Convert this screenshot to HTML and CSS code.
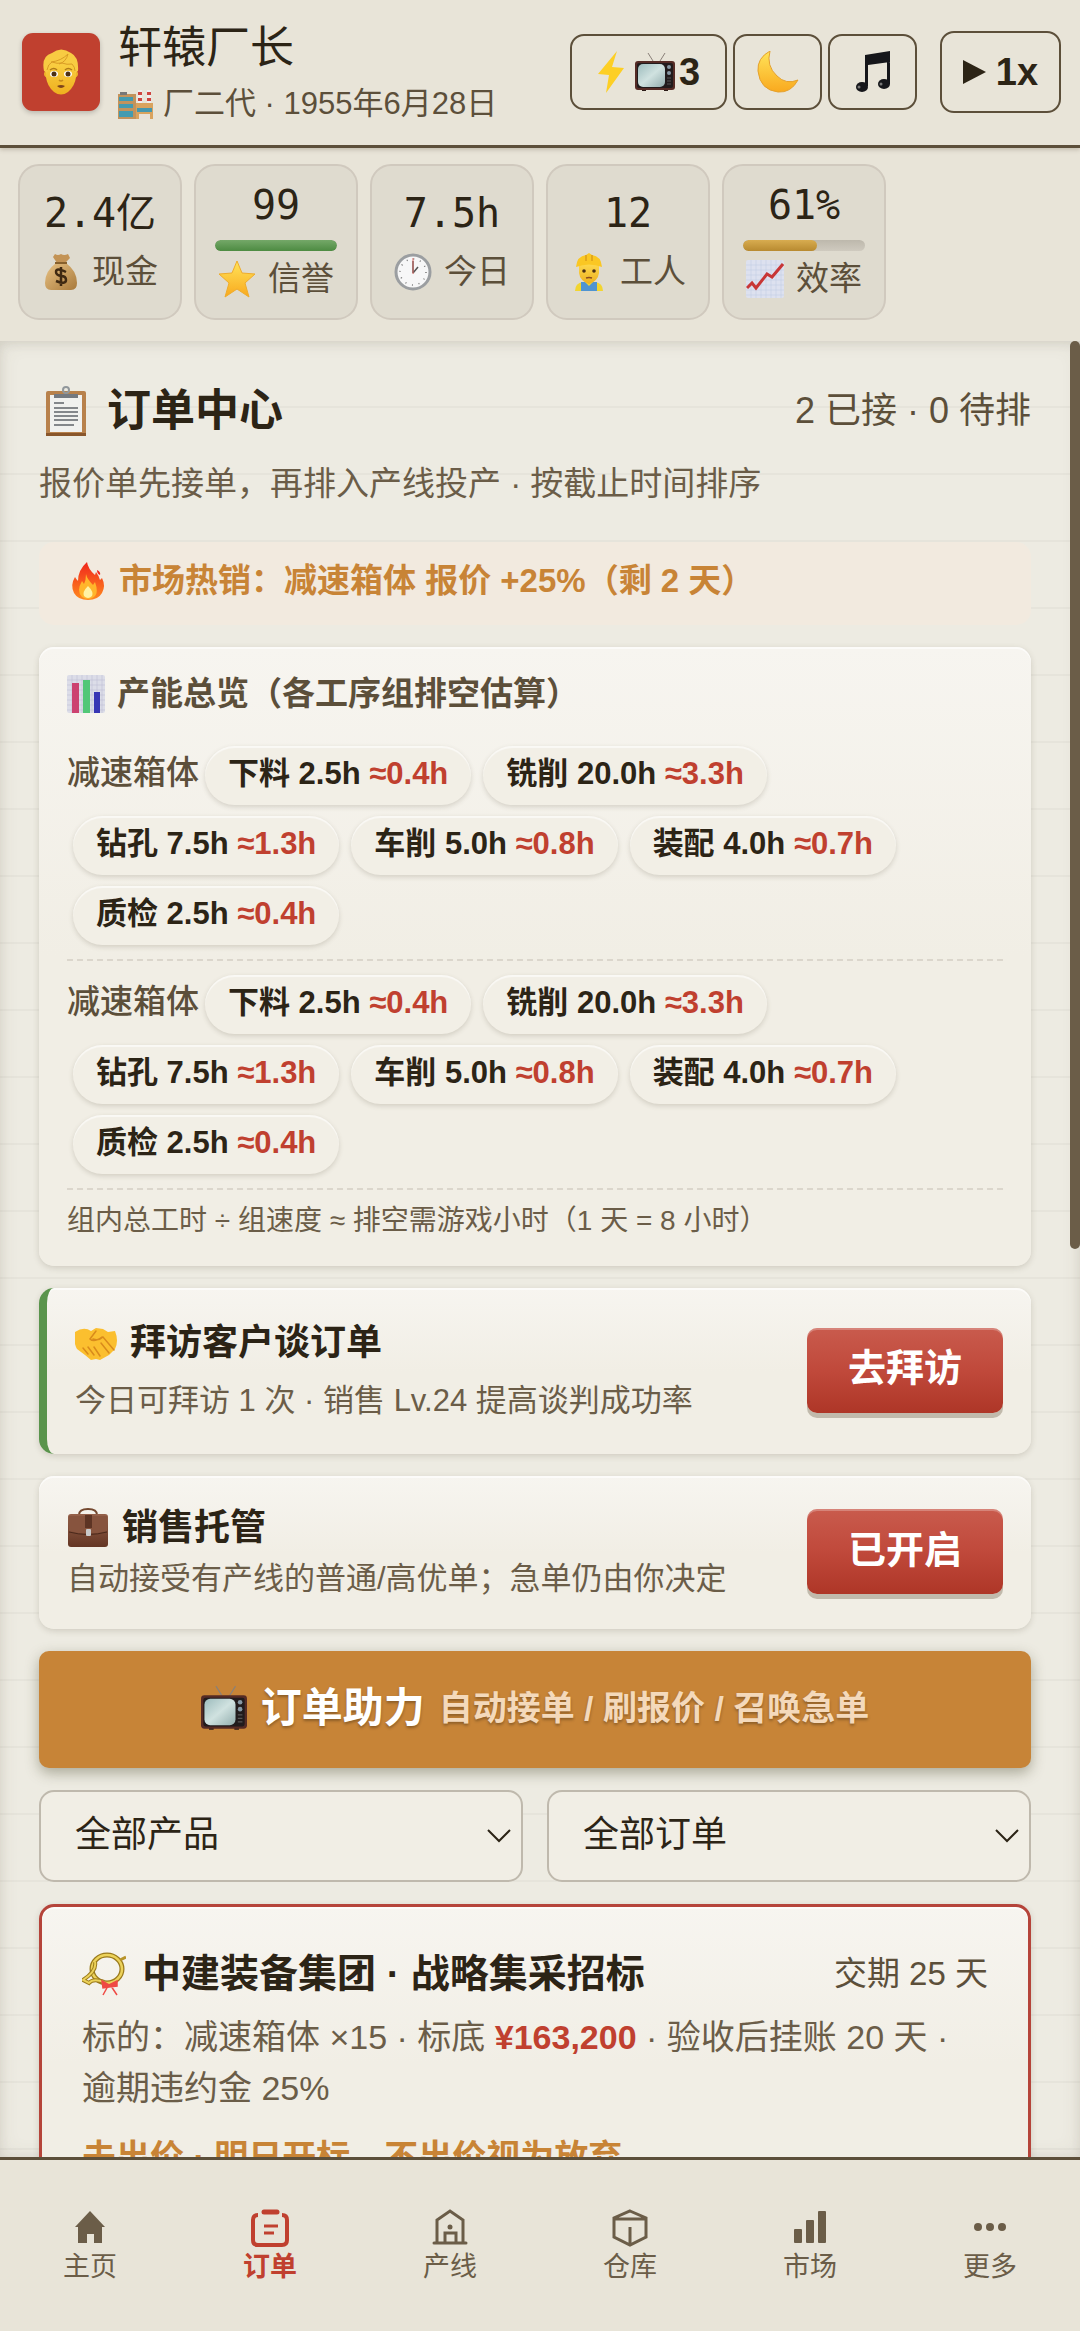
FILE: index.html
```html
<!DOCTYPE html>
<html lang="zh-CN">
<head>
<meta charset="UTF-8">
<meta name="viewport" content="width=device-width, initial-scale=1.0">
<title>订单中心</title>
<link rel="stylesheet" href="styles.css">
</head>
<body>

<!-- 共用图标 -->
<svg class="defs" width="0" height="0" aria-hidden="true">
    <defs>
        <linearGradient id="gold" x1="0" y1="0" x2="0" y2="1">
            <stop offset="0" stop-color="#ffe45a"/>
            <stop offset="1" stop-color="#f9a91e"/>
        </linearGradient>
        <linearGradient id="skin" x1="0" y1="0" x2="0" y2="1">
            <stop offset="0" stop-color="#fdd84c"/>
            <stop offset="1" stop-color="#eeb01f"/>
        </linearGradient>
        <linearGradient id="bag" x1="0" y1="0" x2="1" y2="1">
            <stop offset="0" stop-color="#e9c385"/>
            <stop offset="1" stop-color="#a8793b"/>
        </linearGradient>
        <linearGradient id="leather" x1="0" y1="0" x2="0" y2="1">
            <stop offset="0" stop-color="#946049"/>
            <stop offset="1" stop-color="#643624"/>
        </linearGradient>
        <linearGradient id="screen" x1="0" y1="0" x2="1" y2="1">
            <stop offset="0" stop-color="#9dbcbd"/>
            <stop offset=".5" stop-color="#d0e2e0"/>
            <stop offset="1" stop-color="#93aeae"/>
        </linearGradient>
        <linearGradient id="flame" x1="0" y1="0" x2="0" y2="1">
            <stop offset="0" stop-color="#f0261c"/>
            <stop offset="1" stop-color="#ff8a1f"/>
        </linearGradient>
        <symbol id="tv" viewBox="0 0 40 40">
            <path d="M18 9 13 1M25 9l5-8" stroke="#8a8078" stroke-width="1" fill="none"/>
            <path d="M7 37h4v2H7zM29 37h4v2h-4z" fill="#2c1c18"/>
            <rect x="0" y="9" width="40" height="29" rx="3" fill="#552b25"/>
            <rect x="2" y="11" width="36" height="25" rx="2" fill="#211b1c"/>
            <rect x="3" y="12" width="27" height="23" rx="5" fill="url(#screen)"/>
            <circle cx="34" cy="15" r="2" fill="#8798a4"/>
            <circle cx="34" cy="21" r="2" fill="#8798a4"/>
            <path d="M32 26h4M32 29h4M32 32h4" stroke="#555" stroke-width="1"/>
        </symbol>
    </defs>
</svg>

<!-- 顶部 -->
<header class="header">
    <div class="avatar">
        <svg viewBox="0 0 36 46" width="36" height="46" aria-hidden="true">
            <ellipse cx="18" cy="25" rx="17" ry="7" fill="#efb62b"/>
            <path d="M3 17Q3 5 18 5t15 12v11q-1 9-8 15-7 5-14 0-7-6-8-15z" fill="url(#skin)"/>
            <path d="M1 22Q-2 7 9 4q9-7 19 0 8 4 7 18l-3 2q0-6-3-9-10 2-16-1-7 2-9 10z" fill="#f8cb42"/>
            <path d="M4 21q1-6 5-8 5 2 10 1 5 2 10 1 3 3 3 7" fill="none" stroke="#d99b24" stroke-width="1"/>
            <path d="M8 13Q18 12 25 5q-2 8-9 10" fill="none" stroke="#d99b24" stroke-width="1"/>
            <path d="M7 21q4-3 7 0M22 21q3-3 7 0" stroke="#b07a1a" stroke-width="1.5" fill="none"/>
            <ellipse cx="11" cy="25" rx="4" ry="3" fill="#fff"/>
            <ellipse cx="25" cy="25" rx="4" ry="3" fill="#fff"/>
            <circle cx="11" cy="25" r="2.5" fill="#4c3014"/>
            <circle cx="25" cy="25" r="2.5" fill="#4c3014"/>
            <path d="M16 31q2 2 4 0" stroke="#c58a1b" stroke-width="1.5" fill="none"/>
            <path d="M14 37q4-2 8 0-4 4-8 0z" fill="#7d451c"/>
        </svg>
    </div>
    <div class="player">
        <div class="player-name">轩辕厂长</div>
        <div class="player-sub">
            <svg viewBox="0 0 36 32" width="36" height="32" aria-hidden="true">
                <path d="M20 2h4v16h-4zM29 2h4v16h-4z" fill="#eee"/>
                <path d="M20 4h4v3h-4zM29 4h4v3h-4zM20 10h4v3h-4zM29 10h4v3h-4z" fill="#d0453f"/>
                <path d="M0 6h18v25H0z" fill="#c2935c"/>
                <path d="M2 4h7v3H2z" fill="#777"/>
                <path d="M1 9h14v4H1zM1 16h14v4H1zM1 23h14v6H1z" fill="#439bb0"/>
                <path d="M18 15h17v16H18z" fill="#d9a35e"/>
                <path d="M19 20h15v4H19z" fill="#4597ae"/>
                <path d="M21 26h11v5H21z" fill="#e8e2d8"/>
            </svg>
            <span>厂二代 · 1955年6月28日</span>
        </div>
    </div>
    <div class="tools">
        <button class="tool tool-boost" type="button">
            <svg viewBox="0 0 28 42" width="28" height="42" aria-hidden="true">
                <path d="M20 0 1 23l11 1-3 18 18-25-12-1z" fill="#fdcf25"/>
            </svg>
            <span class="boost-count"><svg width="40" height="40" aria-hidden="true"><use href="#tv"/></svg>3</span>
        </button>
        <button class="tool" type="button" aria-label="夜间模式">
            <svg viewBox="0 0 42 42" width="42" height="42" aria-hidden="true">
                <path d="M13 0Q0 7 1 20q2 19 20 21 13 1 20-12-12 5-21-4Q9 15 13 0z" fill="url(#gold)" stroke="#e5a02b" stroke-width="1"/>
            </svg>
        </button>
        <button class="tool" type="button" aria-label="音乐">
            <svg viewBox="0 0 36 42" width="36" height="42" aria-hidden="true">
                <path d="M10 4 35 0v11L13 14v21h-3zM32 8h3v25h-3z" fill="#15161a"/>
                <ellipse cx="7" cy="36" rx="6" ry="5" fill="#15161a"/>
                <ellipse cx="29" cy="33" rx="6" ry="5" fill="#15161a"/>
                <circle cx="4" cy="36" r="1.5" fill="#777"/>
                <circle cx="26" cy="33" r="1.5" fill="#777"/>
            </svg>
        </button>
        <button class="tool tool-speed" type="button">
            <svg viewBox="0 0 23 24" width="23" height="24" aria-hidden="true"><path d="M0 0 23 12 0 24z" fill="#2c2416"/></svg>
            <span>1x</span>
        </button>
    </div>
</header>

<!-- 资源栏 -->
<section class="stats">
    <div class="stat">
        <div class="stat-value">2.4亿</div>
        <div class="stat-label">
            <svg viewBox="0 0 38 38" width="38" height="38" aria-hidden="true">
                <path d="M13 1q3 2 6 0 3 2 7 0l2 4-5 5H15l-4-6z" fill="#c39355"/>
                <path d="M14 10h10q11 8 11 20 0 7-6 7H9q-6 0-6-7 0-12 11-20z" fill="url(#bag)"/>
                <path d="M13 10h12" stroke="#87602c" stroke-width="2"/>
                <path d="M24 19q-10-5-10 0 0 3 5 4 5 0 5 4 0 5-10 1M19 14v19" stroke="#3f2912" stroke-width="2.5" fill="none"/>
            </svg>
            <span>现金</span>
        </div>
    </div>
    <div class="stat">
        <div class="stat-value">99</div>
        <div class="bar"><div class="bar-fill bar-green" style="width: 100%"></div></div>
        <div class="stat-label">
            <svg viewBox="0 0 38 38" width="38" height="38" aria-hidden="true">
                <path d="m19 1 5 12 13 1-10 9 4 14-12-8-12 8 4-14L1 14l13-1z" fill="url(#gold)" stroke="#efac2b" stroke-width="1" stroke-linejoin="round"/>
            </svg>
            <span>信誉</span>
        </div>
    </div>
    <div class="stat">
        <div class="stat-value">7.5h</div>
        <div class="stat-label">
            <svg viewBox="0 0 38 38" width="38" height="38" aria-hidden="true">
                <circle cx="19" cy="19" r="17" fill="#f7f7f8" stroke="#9b9ea1" stroke-width="3"/>
                <circle cx="19" cy="19" r="13" fill="none" stroke="#777" stroke-width="1.5" stroke-dasharray="1 5.8"/>
                <path d="M19 20V8M19 20l5-6" stroke="#555" stroke-width="1.5"/>
                <path d="M19 21V5" stroke="#d96a65" stroke-width="1"/>
            </svg>
            <span>今日</span>
        </div>
    </div>
    <div class="stat">
        <div class="stat-value">12</div>
        <div class="stat-label">
            <svg viewBox="0 0 38 38" width="38" height="38" aria-hidden="true">
                <path d="M5 38q0-8 8-9h12q8 1 8 9z" fill="#f2d530"/>
                <path d="M11 29h4l4 4 4-4h4v9H11z" fill="#4f94d2"/>
                <path d="M9 11h20v9q-1 8-10 11-9-3-10-11z" fill="url(#skin)"/>
                <path d="M6 14Q7 3 16 2l3-2 3 2q9 1 10 12-13-5-26 0z" fill="#fac723"/>
                <path d="M16 2v6M22 2v6" stroke="#dc9e18" stroke-width="1.5"/>
                <circle cx="14" cy="18" r="1.8" fill="#4c3014"/>
                <circle cx="24" cy="18" r="1.8" fill="#4c3014"/>
                <path d="M16 25q3-1 6 0" stroke="#8b4c1d" stroke-width="1.5" fill="none"/>
            </svg>
            <span>工人</span>
        </div>
    </div>
    <div class="stat">
        <div class="stat-value">61%</div>
        <div class="bar"><div class="bar-fill bar-gold" style="width: 61%"></div></div>
        <div class="stat-label">
            <svg viewBox="0 0 38 38" width="38" height="38" aria-hidden="true">
                <rect width="38" height="38" rx="2" fill="#dde1ef"/>
                <path d="M5 0v38M10 0v38M15 0v38M20 0v38M25 0v38M30 0v38M35 0v38M0 5h38M0 10h38M0 15h38M0 20h38M0 25h38M0 30h38M0 35h38" stroke="#bcc8e2" stroke-width=".5"/>
                <path d="m1 28 5-5 4 5L21 14l5 3L37 4" stroke="#c83636" stroke-width="3" fill="none"/>
            </svg>
            <span>效率</span>
        </div>
    </div>
</section>

<!-- 订单中心 -->
<main class="main">
    <div class="scroll-thumb"></div>

    <div class="page-head">
        <h1 class="page-title">
            <svg viewBox="0 0 42 52" width="42" height="52" aria-hidden="true">
                <rect x="1" y="6" width="40" height="45" rx="2" fill="#b8814b"/>
                <path d="M1 48h40v3H1z" fill="#89562b"/>
                <rect x="5" y="10" width="32" height="37" fill="#f1f1ef"/>
                <path d="M9 9h24v4H9z" fill="#747980"/>
                <circle cx="21" cy="5" r="3" fill="none" stroke="#91979b" stroke-width="2"/>
                <path d="M9 18h10M9 23h24M9 27h24M9 31h24M9 35h24M9 40h20" stroke="#84878b" stroke-width="2"/>
            </svg>
            <span>订单中心</span>
        </h1>
        <div class="page-count">2 已接 · 0 待排</div>
    </div>
    <p class="page-desc">报价单先接单，再排入产线投产 · 按截止时间排序</p>

    <div class="hot">
        <svg viewBox="0 0 38 38" width="38" height="38" aria-hidden="true">
            <path d="M18 0q1 7 8 13l1-3q3 4 4 8l2-2q4 8 0 15-4 7-14 7T5 31q-4-8 1-16 1 2 3 4Q9 8 18 0z" fill="url(#flame)"/>
            <path d="M17 12q1 5 7 11l2-3q4 11-1 15-6 4-12 0-6-6 0-16l2 3q2-4 2-10z" fill="#ffb52b"/>
            <path d="M19 24q6 6 4 10-4 4-8 0-2-4 4-10z" fill="#fff2a5"/>
            <path d="M28 8q4 2 3 5-3-1-3-5z" fill="#f0261c"/>
        </svg>
        <span>市场热销：减速箱体 报价 +25%（剩 2 天）</span>
    </div>

    <section class="card capacity">
        <h2 class="capacity-title">
            <svg viewBox="0 0 38 38" width="38" height="38" aria-hidden="true">
                <rect width="38" height="38" rx="2" fill="#dcdde8"/>
                <path d="M5 0v38M10 0v38M15 0v38M20 0v38M25 0v38M30 0v38M35 0v38M0 5h38M0 10h38M0 15h38M0 20h38M0 25h38M0 30h38M0 35h38" stroke="#bbbbd0" stroke-width=".5"/>
                <path d="M5 8h7v30H5z" fill="#cc4270"/>
                <path d="M16 5h7v33h-7z" fill="#51c777"/>
                <path d="M27 17h6v21h-6z" fill="#3736b4"/>
            </svg>
            <span>产能总览（各工序组排空估算）</span>
        </h2>
        <div class="group">
            <span class="group-name">减速箱体</span>
            <span class="chip">下料 2.5h <em>≈0.4h</em></span>
            <span class="chip">铣削 20.0h <em>≈3.3h</em></span>
            <span class="chip">钻孔 7.5h <em>≈1.3h</em></span>
            <span class="chip">车削 5.0h <em>≈0.8h</em></span>
            <span class="chip">装配 4.0h <em>≈0.7h</em></span>
            <span class="chip">质检 2.5h <em>≈0.4h</em></span>
        </div>
        <div class="group">
            <span class="group-name">减速箱体</span>
            <span class="chip">下料 2.5h <em>≈0.4h</em></span>
            <span class="chip">铣削 20.0h <em>≈3.3h</em></span>
            <span class="chip">钻孔 7.5h <em>≈1.3h</em></span>
            <span class="chip">车削 5.0h <em>≈0.8h</em></span>
            <span class="chip">装配 4.0h <em>≈0.7h</em></span>
            <span class="chip">质检 2.5h <em>≈0.4h</em></span>
        </div>
        <p class="capacity-note">组内总工时 ÷ 组速度 ≈ 排空需游戏小时（1 天 = 8 小时）</p>
    </section>

    <section class="card action visit">
        <div>
            <h2 class="action-title">
                <svg viewBox="0 0 42 42" width="42" height="42" aria-hidden="true">
                    <path d="M0 10q9-6 16-1l5-3 7 1 5 3 7-1q4 10 0 18l-6 6-9 5-4-1-5 1-6-5-8-6q-4-7-2-17z" fill="#fbbf2f"/>
                    <path d="M18 17q6 2 10-2l11 13M21 9l-6 8q4 4 12-2M8 26l5 6M13 25l6 8M19 25l6 9M26 21l8 10" stroke="#d98a1b" stroke-width="1.5" fill="none" stroke-linecap="round"/>
                </svg>
                <span>拜访客户谈订单</span>
            </h2>
            <p class="action-desc">今日可拜访 1 次 · 销售 Lv.24 提高谈判成功率</p>
        </div>
        <button class="btn-red" type="button">去拜访</button>
    </section>

    <section class="card action trust">
        <div>
            <h2 class="action-title">
                <svg viewBox="0 0 42 42" width="42" height="42" aria-hidden="true">
                    <path d="M12 8q0-6 9-6t9 6" stroke="#74482f" stroke-width="2" fill="none"/>
                    <rect x="1" y="7" width="40" height="33" rx="3" fill="url(#leather)"/>
                    <path d="M2 9h38v15q-19 5-38 0z" fill="#87543e"/>
                    <path d="M2 25q19 5 38 0" stroke="#4b291b" stroke-width="1" fill="none"/>
                    <path d="M18 8h7v13h-7z" fill="#5d3424"/>
                    <rect x="19" y="22" width="5" height="7" rx="1" fill="#c9c9c9"/>
                </svg>
                <span>销售托管</span>
            </h2>
            <p class="action-desc">自动接受有产线的普通/高优单；急单仍由你决定</p>
        </div>
        <button class="btn-red" type="button">已开启</button>
    </section>

    <button class="boost" type="button">
        <svg width="46" height="46" aria-hidden="true"><use href="#tv"/></svg>
        <span class="boost-title">订单助力</span>
        <span class="boost-sub">自动接单 / 刷报价 / 召唤急单</span>
    </button>

    <div class="filters">
        <select class="filter" aria-label="产品筛选"><option>全部产品</option></select>
        <select class="filter" aria-label="订单筛选"><option>全部订单</option></select>
    </div>

    <article class="card bid">
        <div class="bid-head">
            <h2 class="bid-title">
                <svg viewBox="0 0 44 44" width="44" height="44" aria-hidden="true">
                    <ellipse cx="25" cy="17" rx="15" ry="14" fill="none" stroke="#9a7a1c" stroke-width="5"/>
                    <ellipse cx="25" cy="17" rx="15" ry="14" fill="none" stroke="#ecd25a" stroke-width="2.5"/>
                    <path d="M13 10q2 9-12 18l6 3q4-5 15-1" fill="none" stroke="#9a7a1c" stroke-width="4"/>
                    <path d="M13 10q2 9-12 18l6 3q4-5 15-1" fill="none" stroke="#ecd25a" stroke-width="2"/>
                    <path d="m38 8 6-3" stroke="#b8942a" stroke-width="3"/>
                    <path d="m20 29 7 4 8-4v5l-8 1-6 1zM26 34l-5 9M29 34l6 9" fill="#ef4a44" stroke="#ef4a44" stroke-width="1.5"/>
                </svg>
                <span>中建装备集团 · 战略集采招标</span>
            </h2>
            <span class="bid-due">交期 25 天</span>
        </div>
        <p class="bid-desc">标的：减速箱体 ×15 · 标底 <strong>¥163,200</strong> · 验收后挂账 20 天 · <span class="penalty">逾期违约金 25%</span></p>
        <p class="bid-warn">未出价 · 明日开标，不出价视为放弃</p>
    </article>
</main>

<!-- 底部导航 -->
<nav class="nav">
    <a href="#" class="nav-item">
        <svg viewBox="0 0 40 40" width="40" height="40" aria-hidden="true">
            <path d="M20 3 35 19h-3v16h-8v-9h-7v9H8V19H5z" fill="currentColor"/>
        </svg>
        <span>主页</span>
    </a>
    <a href="#" class="nav-item active" aria-current="page">
        <svg viewBox="0 0 40 40" width="40" height="40" fill="none" stroke="currentColor" stroke-width="4" aria-hidden="true">
            <path d="M8 7q-5 0-5 5v20q0 5 5 5h24q5 0 5-5V12q0-5-5-5"/>
            <path d="M14 4h13" stroke-width="5" stroke-linecap="round"/>
            <path d="M14 18h14M14 25h10" stroke-width="3"/>
        </svg>
        <span>订单</span>
    </a>
    <a href="#" class="nav-item">
        <svg viewBox="0 0 40 40" width="40" height="40" fill="none" stroke="currentColor" stroke-width="3" aria-hidden="true">
            <path d="M7 35V12l13-9 13 9v23M15 35V25h11v10"/>
            <path d="M4 35h32" stroke-linecap="round"/>
            <circle cx="20" cy="19" r="2.5" fill="currentColor" stroke="none"/>
        </svg>
        <span>产线</span>
    </a>
    <a href="#" class="nav-item">
        <svg viewBox="0 0 40 40" width="40" height="40" fill="none" stroke="currentColor" stroke-width="3" aria-hidden="true">
            <path d="m20 3 16 7v19l-16 8-16-8V10zM4 11h32M20 19v18"/>
        </svg>
        <span>仓库</span>
    </a>
    <a href="#" class="nav-item">
        <svg viewBox="0 0 40 40" width="40" height="40" fill="currentColor" aria-hidden="true">
            <rect x="4" y="21" width="8" height="14" rx="1"/>
            <rect x="16" y="12" width="8" height="23" rx="1"/>
            <rect x="28" y="3" width="8" height="32" rx="1"/>
        </svg>
        <span>市场</span>
    </a>
    <a href="#" class="nav-item">
        <svg viewBox="0 0 40 40" width="40" height="40" fill="currentColor" aria-hidden="true">
            <circle cx="8" cy="19" r="4"/>
            <circle cx="20" cy="19" r="4"/>
            <circle cx="32" cy="19" r="4"/>
        </svg>
        <span>更多</span>
    </a>
</nav>
</body>
</html>
```
FILE: styles.css
```css
* {
    box-sizing: border-box;
}
body {
    display: flex;
    flex-direction: column;
    height: 100vh;
    margin: 0;
    background: #e8e4d8;
    color: #2c2416;
    font-family: "Liberation Sans", "Noto Sans CJK SC", sans-serif;
}
h1, h2, p {
    margin: 0;
}
button, select {
    color: inherit;
    font-family: inherit;
    cursor: pointer;
}
svg {
    flex: none;
}
.defs {
    position: absolute;
}
/* 顶部 */
.header {
    display: flex;
    align-items: center;
    gap: 18px;
    padding: 17px 19px 19px 22px;
    border-bottom: 3px solid #5c4f3a;
    box-shadow: 0 2px 4px rgba(92, 79, 58, 0.25);
    z-index: 1;
}
.avatar {
    display: flex;
    flex: none;
    align-items: center;
    justify-content: center;
    width: 78px;
    height: 78px;
    border-radius: 11px;
    background: #c0402f;
    box-shadow: 0 2px 5px rgba(0, 0, 0, 0.2);
}
.player {
    flex: 1;
    white-space: nowrap;
}
.player-name {
    font-size: 44px;
    line-height: 62px;
}
.player-sub {
    display: flex;
    align-items: center;
    gap: 9px;
    margin-top: 3px;
    color: #5c4f3a;
    font-size: 31px;
    line-height: 44px;
}
.tools {
    display: flex;
    align-items: center;
    gap: 6px;
}
.tool {
    display: flex;
    align-items: center;
    justify-content: center;
    gap: 10px;
    width: 89px;
    height: 76px;
    padding: 0;
    border: 2px solid #5c4f3a;
    border-radius: 14px;
    background: none;
    font-size: 38px;
    font-weight: 700;
    line-height: 48px;
}
.tool-boost {
    width: 157px;
}
.boost-count {
    display: flex;
    align-items: center;
    gap: 4px;
}
.tool-speed {
    width: 121px;
    height: 82px;
    margin-left: 17px;
}
/* 资源栏 */
.stats {
    display: flex;
    gap: 12px;
    padding: 16px 18px 21px;
}
.stat {
    display: flex;
    flex-direction: column;
    justify-content: center;
    width: 164px;
    padding: 16px 19px;
    border: 2px solid #d0c9be;
    border-radius: 21px;
    background: #dfdbcf;
    text-align: center;
}
.stat-value {
    font-family: "DejaVu Sans Mono", "Noto Sans CJK SC", monospace;
    font-size: 40px;
    line-height: 46px;
    white-space: nowrap;
}
.stat-label {
    display: flex;
    align-items: center;
    justify-content: center;
    gap: 12px;
    margin-top: 13px;
    color: #5c4f3a;
    font-size: 33px;
    line-height: 46px;
    white-space: nowrap;
}
.bar {
    height: 11px;
    margin-top: 12px;
    border-radius: 6px;
    background: linear-gradient(#bdb8ac, #cfcabf);
    overflow: hidden;
}
.bar + .stat-label {
    margin-top: 5px;
}
.bar-fill {
    height: 100%;
    border-radius: 6px;
}
.bar-green {
    background: linear-gradient(#74a868, #4d8b42);
}
.bar-gold {
    background: linear-gradient(#d8ac50, #b88a30);
}
/* 主内容 */
.main {
    position: relative;
    flex: 1;
    min-height: 0;
    padding: 37px 49px 0 39px;
    overflow: hidden;
    background: repeating-linear-gradient(#edebe2 0 65px, #e6e4db 65px 67px);
    box-shadow: inset 0 0 20px rgba(92, 79, 58, 0.1), inset 0 3px 10px rgba(92, 79, 58, 0.1);
}
/* 滚动条浮在内容之上 */
.scroll-thumb {
    position: absolute;
    top: 0;
    right: 0;
    width: 10px;
    height: 50%;
    border-radius: 5px;
    background: #6b5d48;
}
.page-head {
    display: flex;
    align-items: center;
    justify-content: space-between;
}
.page-title {
    display: flex;
    align-items: center;
    gap: 20px;
    padding-left: 6px;
    font-size: 44px;
    line-height: 66px;
}
.page-count {
    color: #5c4f3a;
    font-size: 36px;
    line-height: 66px;
}
.page-desc {
    margin-top: 15px;
    color: #6b5d48;
    font-size: 33px;
    line-height: 50px;
}
.hot {
    display: flex;
    align-items: center;
    gap: 12px;
    margin-top: 33px;
    padding: 14px 30px 19px;
    border-radius: 15px;
    background: #f2eadf;
    color: #c88436;
    font-size: 33px;
    font-weight: 700;
    line-height: 50px;
}
.card {
    margin-top: 22px;
    border-radius: 15px;
    background: linear-gradient(#f7f5f0, #f1eee5 50%);
    box-shadow: 0 2px 6px rgba(92, 79, 58, 0.2), inset 0 2px 0 rgba(255, 255, 255, 0.6);
}
/* 产能总览 */
.capacity {
    padding: 22px 28px 24px;
}
.capacity-title {
    display: flex;
    align-items: center;
    gap: 12px;
    margin-bottom: 13px;
    color: #5c4f3a;
    font-size: 33px;
    line-height: 50px;
}
.group {
    display: flex;
    flex-wrap: wrap;
    align-items: baseline;
    row-gap: 11px;
    padding: 14px 0;
    border-bottom: 2px dashed #dbd6cc;
}
.group-name {
    color: #5c4f3a;
    font-size: 33px;
    font-weight: 500;
    line-height: 40px;
}
.chip {
    margin: 0 6px;
    padding: 8px 23px 11px;
    border-radius: 30px;
    background: #f2efe6;
    box-shadow: 0 2px 5px rgba(92, 79, 58, 0.2), inset 0 2px 1px rgba(255, 255, 255, 0.6);
    font-size: 31px;
    font-weight: 700;
    line-height: 40px;
    white-space: nowrap;
}
.chip em {
    color: #c0402f;
    font-style: normal;
}
.capacity-note {
    margin-top: 10px;
    color: #6b5d48;
    font-size: 28px;
    line-height: 42px;
}
/* 拜访 / 托管 */
.action {
    display: flex;
    align-items: center;
    justify-content: space-between;
    padding: 25px 28px 27px;
}
.visit {
    padding: 28px 28px 30px;
    border-left: 8px solid #5a944c;
}
.action-title {
    display: flex;
    align-items: center;
    gap: 13px;
    font-size: 36px;
    line-height: 54px;
}
.visit .action-title {
    margin-bottom: 7px;
}
.action-desc {
    color: #6b5d48;
    font-size: 31px;
    line-height: 47px;
}
.btn-red {
    flex: none;
    width: 196px;
    height: 85px;
    padding: 0 0 4px;
    border: 0;
    border-radius: 10px;
    background: linear-gradient(#c95b4d, #c0493b 50%, #ae3627);
    box-shadow: 0 5px 0 #c1baac, inset 0 2px 0 rgba(255, 255, 255, 0.25);
    color: #fff;
    font-size: 38px;
    font-weight: 700;
    line-height: 54px;
}
/* 订单助力 */
.boost {
    display: flex;
    align-items: center;
    justify-content: center;
    gap: 14px;
    width: 100%;
    height: 117px;
    margin-top: 22px;
    padding: 0 0 3px;
    border: 0;
    border-radius: 10px;
    background: #c78437;
    box-shadow: 0 5px 14px rgba(70, 70, 40, 0.4);
    color: #fff;
    font-weight: 700;
    line-height: 60px;
    text-shadow: 0 2px 3px rgba(0, 0, 0, 0.3);
}
.boost-title {
    font-size: 41px;
}
.boost-sub {
    color: #f4d9bb;
    font-size: 34px;
}
/* 筛选 */
.filters {
    display: flex;
    gap: 24px;
    margin-top: 22px;
}
.filter {
    flex: 1;
    height: 92px;
    padding: 0 34px 4px;
    border: 2px solid #bfb9ad;
    border-radius: 15px;
    appearance: none;
    background: #f1eee5 url("data:image/svg+xml,%3Csvg xmlns='http://www.w3.org/2000/svg' width='24' height='14'%3E%3Cpath d='M1 1l11 11L23 1' fill='none' stroke='%232c2416' stroke-width='2'/%3E%3C/svg%3E") no-repeat right 10px center;
    font-size: 36px;
}
/* 招标 */
.bid {
    padding: 39px 40px;
    border: 3px solid #b5443a;
}
.bid-head {
    display: flex;
    align-items: center;
    justify-content: space-between;
}
.bid-title {
    display: flex;
    align-items: center;
    gap: 16px;
    font-size: 39px;
    line-height: 56px;
}
.bid-due {
    color: #5c4f3a;
    font-size: 33px;
    line-height: 56px;
}
.bid-desc {
    margin-top: 10px;
    color: #6b5d48;
    font-size: 34px;
    line-height: 51px;
}
.bid-desc strong {
    color: #c0402f;
}
.penalty {
    white-space: nowrap;
}
.bid-warn {
    margin-top: 18px;
    color: #c88436;
    font-size: 34px;
    font-weight: 700;
    line-height: 50px;
}
/* 底部导航 */
.nav {
    display: grid;
    grid-template-columns: repeat(6, 1fr);
    padding: 48px 0 47px;
    border-top: 3px solid #5c4f3a;
    z-index: 1;
}
.nav-item {
    display: flex;
    flex-direction: column;
    align-items: center;
    gap: 2px;
    color: #6b5d48;
    font-size: 27px;
    line-height: 34px;
    text-decoration: none;
}
.nav-item.active {
    color: #c0402f;
    font-weight: 700;
}
```
